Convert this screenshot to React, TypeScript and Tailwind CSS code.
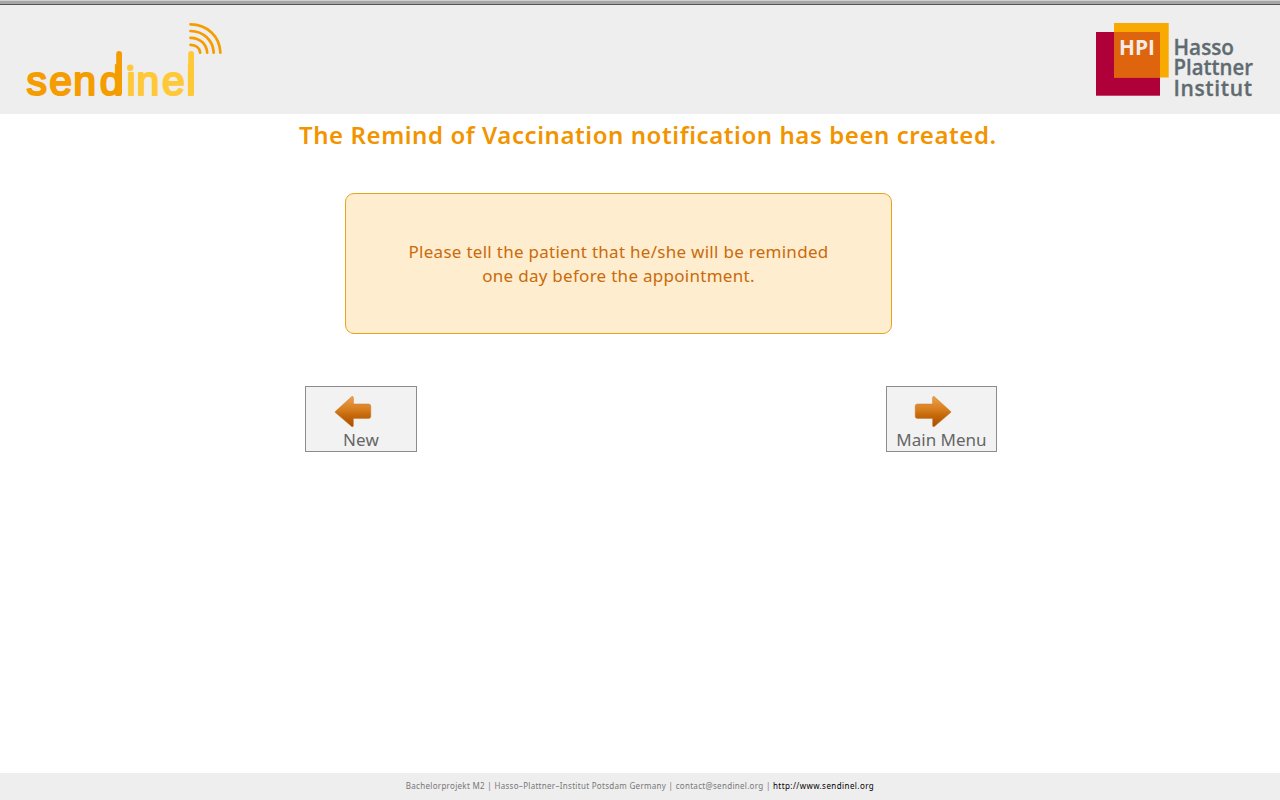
const SANS = "font-['Noto_Sans',sans-serif]";

function SendinelLogo() {
  return (
    <svg width="200" height="80" viewBox="25 20 200 80" overflow="visible" role="img" aria-label="sendinel">
      <g fontFamily="Liberation Sans, sans-serif" fontSize="41" strokeWidth="2.1" strokeLinejoin="round" strokeLinecap="round">
        <text y="94.9" x="26.600 49.300 73.300 99.700" fill="#f59c00" stroke="#f59c00">send</text>
        <text y="94.900" x="125.600 136.600 161.900 186.600" fill="#ffc836" stroke="#ffc836">ınel</text>
      </g>
      <rect x="116.200" y="51" width="5.800" height="45" rx="2.900" fill="#f59c00" />
      <rect x="188.200" y="51" width="5.800" height="45" rx="2.900" fill="#ffc836" />
      <circle cx="130.200" cy="67.800" r="3.200" fill="#ffc836" />
      <g fill="none" stroke="#f59c00" strokeWidth="2.700" strokeLinecap="round">
        <path d="M190.500 44.800C196 45 199.800 48 200.200 52.600" />
        <path d="M190.500 37.800C200 38 206.600 44 207.200 52.600" />
        <path d="M190.500 31C203.500 31.200 213 40.500 213.700 52.600" />
        <path d="M190.500 24.300C207.500 24.500 219.700 36.500 220.400 52.600" />
      </g>
    </svg>
  );
}

function HpiLogo() {
  return (
    <svg width="162" height="80" viewBox="1094 20 162 80" role="img" aria-label="Hasso Plattner Institut">
      <rect x="1096" y="32" width="64" height="63.700" fill="#b00039" />
      <rect x="1114" y="23" width="54.700" height="54.500" fill="#f9aa00" />
      <rect x="1114" y="32" width="46" height="45.500" fill="#de640d" />
      <g fontFamily="Open Sans, sans-serif" fontWeight="600">
        <text x="1119" y="54.500" fontSize="21.500" fontWeight="700" fill="#f3ebe6" textLength="36" lengthAdjust="spacingAndGlyphs">HPI</text>
        <g fill="#606b70" stroke="#606b70" strokeWidth=".3" fontSize="21">
          <text x="1173.500" y="54.500" textLength="60.500" lengthAdjust="spacingAndGlyphs">Hasso</text>
          <text x="1173.500" y="75" textLength="79.500" lengthAdjust="spacingAndGlyphs">Plattner</text>
          <text x="1173.500" y="95.500" textLength="78.500" lengthAdjust="spacing">Institut</text>
        </g>
      </g>
    </svg>
  );
}

function Arrow({ right = false }: { right?: boolean }) {
  const id = right ? "arrow-right" : "arrow-left";
  return (
    <svg width="38" height="34" viewBox="0 0 38 34" className={right ? "-scale-x-100" : ""}>
      <defs>
        <linearGradient id={id} x1="0" y1="0" x2="0" y2="1">
          <stop offset="0" stopColor="#f0a04a" />
          <stop offset="0.45" stopColor="#d57c1c" />
          <stop offset="0.6" stopColor="#c76a0b" />
          <stop offset="1" stopColor="#a84f00" />
        </linearGradient>
      </defs>
      <path
        d="M1.300 16.400L17.800 1.600Q19.400 1 19.400 3V9H34.500Q36.800 9 36.800 11.200V21.400Q36.800 23.500 34.500 23.500H19.400V30.500Q19.400 32.300 17.600 31.500L1.300 17.500Q.6 17 1.300 16.400Z"
        fill={`url(#${id})`}
        stroke="#c77a2b"
        strokeWidth=".5"
      />
    </svg>
  );
}

export default function App() {
  return (
    <div className={`flex h-[800px] w-[1280px] flex-col overflow-hidden bg-white ${SANS}`}>
      <div className="h-px shrink-0 bg-[#cfcfcf]" />
      <div className="h-[3px] shrink-0 bg-[#a5a7a5]" />
      <div className="h-px shrink-0 bg-[#555555]" />
      <header className="flex h-[109px] shrink-0 justify-between bg-[#eeeeee] pt-[15px] pr-6 pl-[25px]">
        <SendinelLogo />
        <HpiLogo />
      </header>

      <main className="flex-1">
        <h1 className="mt-1 ml-[299px] h-[35px] text-2xl leading-[34px] font-semibold tracking-[0.57px] whitespace-nowrap text-[#f29400]">
          The Remind of Vaccination notification has been created.
        </h1>
        <section className="mt-10 ml-[345px] flex h-[141px] w-[547px] flex-col items-center justify-center rounded-[9px] border border-[#e9a31b] bg-[#ffedd0] text-[17px] leading-6 tracking-[0.28px] whitespace-nowrap text-[#c96b0a]">
          <p>Please tell the patient that he/she will be reminded</p>
          <p>one day before the appointment.</p>
        </section>
        <div className="mt-[52px] ml-[305px] flex w-[692px] justify-between text-[17px] leading-6 text-[#666666]">
          <button className="flex h-[66px] w-28 flex-col items-center border border-[#8c8c8c] bg-[#f2f2f2] pt-2">
            <span className="mr-4 h-[33px]"><Arrow /></span>
            <span className="tracking-[0.1px]">New</span>
          </button>
          <button className="flex h-[66px] w-[111px] flex-col items-center border border-[#8c8c8c] bg-[#f2f2f2] pt-2">
            <span className="mr-[17px] h-[33px]"><Arrow right /></span>
            <span className="whitespace-nowrap">Main Menu</span>
          </button>
        </div>
      </main>

      <footer className="flex h-[27px] shrink-0 items-center justify-center bg-[#eeeeee] pb-px text-[8px] tracking-[0.3px] text-[#777777]">
        <p className="whitespace-pre">
          Bachelorprojekt M2 | Hasso–Plattner–Institut Potsdam Germany | contact@sendinel.org | <a className="tracking-[0.43px] text-black">http://www.sendinel.org</a>
        </p>
      </footer>
    </div>
  );
}
